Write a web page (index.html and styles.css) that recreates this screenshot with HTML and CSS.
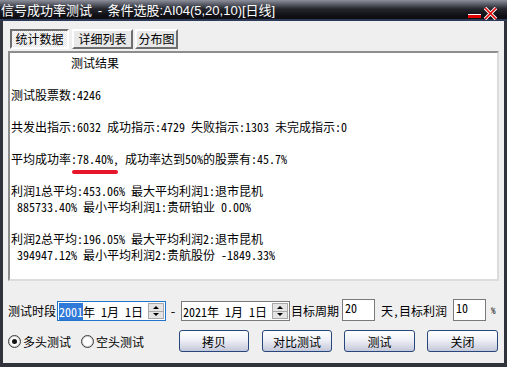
FILE: index.html
```html
<!DOCTYPE html>
<html lang="zh">

<head>
    <meta charset="UTF-8">
    <title>信号成功率测试</title>
    <link rel="stylesheet" href="styles.css">
</head>

<body>
    <div class="window">
        <div class="titlebar">
            <span class="title">信号成功率测试<span class="latin dash-gap"> - </span>条件选股<span class="latin">:AI04(5,20,10)[</span>日线<span class="latin">]</span></span>
            <svg class="winbtns" width="31" height="13" viewBox="0 0 31 13">
                <rect x="1" y="7" width="13" height="1" fill="#ffffff" />
                <rect x="1" y="8" width="13" height="3" fill="#e00000" />
                <path d="M18 1 L29 12 M29 1 L18 12" stroke="#ffffff" stroke-width="3.4" />
                <path d="M18 1 L29 12 M29 1 L18 12" stroke="#e00000" stroke-width="1.6" />
            </svg>
        </div>

        <div class="client">
            <div class="tabs">
                <span class="tab tab-active">统计数据</span>
                <span class="tab tab-list">详细列表</span>
                <span class="tab tab-dist">分布图</span>
            </div>

            <div class="result">
                <div class="line heading">测试结果</div>
                <div class="line"></div>
                <div class="line">测试股票数:4246</div>
                <div class="line"></div>
                <div class="line">共发出指示:6032 成功指示:4729 失败指示:1303 未完成指示:0</div>
                <div class="line"></div>
                <div class="line">平均成功率:<span class="mark">78.40%</span>, 成功率达到50%的股票有:45.7%</div>
                <div class="line"></div>
                <div class="line">利润1总平均:453.06% 最大平均利润1:退市昆机</div>
                <div class="line indent">885733.40% 最小平均利润1:贵研铂业 0.00%</div>
                <div class="line"></div>
                <div class="line">利润2总平均:196.05% 最大平均利润2:退市昆机</div>
                <div class="line indent">394947.12% 最小平均利润2:贵航股份 -1849.33%</div>
            </div>

            <div class="row row-period">
                <span class="label">测试时段</span>
                <div class="date date-focus">
                    <span class="sel">2001</span><span>年 1月 1日</span>
                    <div class="spin">
                        <span class="spin-up"></span>
                        <span class="spin-down"></span>
                    </div>
                </div>
                <span class="dash">-</span>
                <div class="date">
                    <span>2021年 1月 1日</span>
                    <div class="spin">
                        <span class="spin-up"></span>
                        <span class="spin-down"></span>
                    </div>
                </div>
                <span class="label label-cycle">目标周期</span>
                <div class="num num-cycle">20</div>
                <span class="label label-profit">天,目标利润</span>
                <div class="num num-profit">10</div>
                <span class="pct">%</span>
            </div>

            <div class="row row-actions">
                <span class="radio radio-on"></span>
                <span class="radio-text">多头测试</span>
                <span class="radio radio-second"></span>
                <span class="radio-text">空头测试</span>
                <button class="btn btn-copy">拷贝</button>
                <button class="btn btn-compare">对比测试</button>
                <button class="btn btn-test">测试</button>
                <button class="btn btn-close">关闭</button>
            </div>
        </div>
    </div>
</body>

</html>
```

FILE: styles.css
```css
body {
    margin: 0;
    font-family: "Noto Sans CJK SC", "DejaVu Sans", sans-serif;
    font-size: 12px;
    font-feature-settings: "hwid" 1;
    color: #000;
}

* {
    box-sizing: border-box;
}

.window {
    width: 507px;
    height: 367px;
    display: flex;
    flex-direction: column;
    background: #30333b;
}

/* title bar */
.titlebar {
    flex: none;
    height: 21px;
    display: flex;
    padding-left: 1px;
    background: linear-gradient(#8d909b 0, #5d606b 4px, #25262d 9px, #0e0e14 16px, #0e0e14 19px, #2c3a58 19px);
}

.title {
    color: #fff;
    font-size: 13px;
    line-height: 20px;
    white-space: pre;
}

.title .latin {
    font-family: "Liberation Sans", sans-serif;
    font-feature-settings: normal;
}

.title .dash-gap {
    padding: 0 2px;
}

.winbtns {
    margin: 7px 9px 0 auto;
}

/* client area */
.client {
    flex: 1;
    margin: 0 3px 4px;
    padding: 8px 5px 0;
    background: #efefef;
    display: flex;
    flex-direction: column;
}

.tabs {
    display: flex;
    height: 20px;
    margin-left: 2px;
}

.tab {
    height: 20px;
    line-height: 16px;
    text-align: center;
    border: 2px solid;
    border-color: #ffffff #6f6f6f #6f6f6f #ffffff;
    background: #e8e8e8;
}

.tab-active {
    width: 59px;
    margin-right: 3px;
    border-color: #6f6f6f #ffffff #ffffff #6f6f6f;
    background: repeating-conic-gradient(#ffffff 0 25%, #e2e2e2 0 50%) 0 0 / 2px 2px;
}

.tab-list {
    width: 61px;
    margin-right: 2px;
}

.tab-dist {
    width: 43px;
}

.result {
    margin-top: 2px;
    height: 230px;
    padding: 2px 1px;
    border: 2px solid;
    border-color: #8d8d8d #dcdcdc #dcdcdc #8d8d8d;
    background: #fff;
}

.line {
    height: 16px;
    line-height: 16px;
    white-space: pre;
}

.heading {
    padding-left: 60px;
}

.indent {
    padding-left: 6px;
}

.mark {
    position: relative;
    display: inline-block;
    height: 16px;
}

.mark::after {
    content: "";
    position: absolute;
    left: -5px;
    top: 19px;
    width: 46px;
    height: 4px;
    border-radius: 2px;
    background: #e8162b;
}

/* control rows */
.row {
    display: flex;
    align-items: center;
    height: 22px;
}

.row-period {
    margin-top: 18px;
}

.row-actions {
    margin-top: 9px;
}

.label {
    white-space: nowrap;
}

.date {
    display: flex;
    align-items: center;
    width: 109px;
    height: 20px;
    margin-top: 2px;
    margin-left: 1px;
    padding-left: 1px;
    border: 1px solid #7a7a7a;
    background: #fff;
    white-space: pre;
}

.date-focus {
    border-color: #1f74cc;
}

.date .sel {
    background: #2f7ad8;
    color: #fff;
}

.spin {
    margin-left: auto;
    margin-right: 1px;
    width: 16px;
    height: 16px;
    display: flex;
    flex-direction: column;
    border: 1px solid #a8a8a8;
    background: #e4e4e4;
}

.spin span {
    flex: 1;
    display: flex;
    align-items: center;
    justify-content: center;
}

.spin-up {
    border-bottom: 1px solid #a8a8a8;
}

.spin-up::before {
    content: "";
    border: 3px solid transparent;
    border-top: 0;
    border-bottom: 3px solid #000;
}

.spin-down::before {
    content: "";
    border: 3px solid transparent;
    border-bottom: 0;
    border-top: 3px solid #000;
}

.dash {
    width: 14px;
    text-align: center;
}

.label-cycle {
    margin-left: 1px;
}

.num {
    width: 33px;
    height: 22px;
    padding: 0 2px;
    line-height: 16px;
    border: 1px solid #7a7a7a;
    background: #fff;
}

.num-cycle {
    margin-left: 3px;
}

.label-profit {
    margin-left: 6px;
}

.num-profit {
    margin-left: 6px;
}

.pct {
    margin-left: 5px;
    font-size: 9px;
}

.radio {
    width: 13px;
    height: 13px;
    margin-right: 2px;
    border: 1px solid #3c3c3c;
    border-radius: 50%;
    background: #fff;
    box-shadow: inset 0 0 0 1px #d0d0d0;
    display: flex;
    align-items: center;
    justify-content: center;
}

.radio-on::after {
    content: "";
    width: 5px;
    height: 5px;
    border-radius: 50%;
    background: #111;
}

.radio-second {
    margin-left: 10px;
}

.btn {
    height: 22px;
    padding: 0;
    font: inherit;
    border: 1px solid #27467b;
    border-radius: 3px;
    background: linear-gradient(#ffffff, #eef0f6 45%, #c4c7d9);
    color: #000;
}

.btn-copy {
    width: 70px;
    margin-left: 35px;
}

.btn-compare {
    width: 70px;
    margin-left: 13px;
}

.btn-test {
    width: 71px;
    margin-left: 12px;
}

.btn-close {
    width: 71px;
    margin-left: 12px;
}
```
